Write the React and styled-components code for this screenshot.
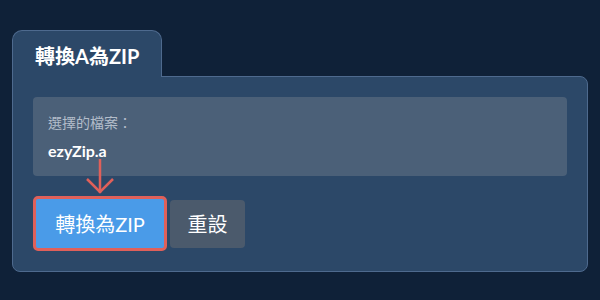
import React from 'react';
import styled, { createGlobalStyle } from 'styled-components';

const GlobalStyle = createGlobalStyle`
    html, body {
        margin: 0;
        background: #0f2138;
    }
    body {
        font-family: Lato, "Noto Sans CJK TC", sans-serif;
        color: white;
    }
`;

export default function App() {
    return (
        <>
            <GlobalStyle />
            <Page>
                <Tab>轉換A為ZIP</Tab>
                <Panel>
                    <FileBox>
                        <FileLabel>選擇的檔案：</FileLabel>
                        <FileName>ezyZip.a</FileName>
                    </FileBox>
                    <ActionRow>
                        <Pointer viewBox="0 0 30 36" width="30" height="36">
                            <line x1="15" y1="0" x2="15" y2="34" />
                            <polyline points="2,20 15,33 28,20" />
                        </Pointer>
                        <Button primary>轉換為ZIP</Button>
                        <Button>重設</Button>
                    </ActionRow>
                </Panel>
            </Page>
        </>
    );
}

const Page = styled.div`
    padding: 30px 12px 0 12px;
    width: 576px;
`;

const Tab = styled.div`
    position: relative;
    z-index: 1;
    display: inline-flex;
    align-items: center;
    box-sizing: border-box;
    width: 150px;
    height: 47px;
    margin-bottom: -1px;
    padding: 2px 0 0 22px;
    background: #2c4868;
    border: 1px solid #4e6a8e;
    border-bottom: none;
    border-radius: 10px 10px 0 0;
    font-size: 20px;
    font-weight: 700;
`;

const Panel = styled.div`
    box-sizing: border-box;
    padding: 20px;
    background: #2c4868;
    border: 1px solid #4e6a8e;
    border-radius: 0 8px 8px 8px;
`;

const FileBox = styled.div`
    padding: 16px 15px 14px 15px;
    background: #4b6078;
    border-radius: 4px;
`;

const FileLabel = styled.div`
    font-size: 14px;
    line-height: 20px;
    color: #b3bdca;
`;

const FileName = styled.div`
    margin-top: 7px;
    font-size: 16px;
    line-height: 22px;
    font-weight: 700;
`;

const ActionRow = styled.div`
    position: relative;
    display: flex;
    align-items: center;
    gap: 3px;
    margin-top: 20px;
`;

const Pointer = styled.svg`
    position: absolute;
    left: 52px;
    top: -37px;
    fill: none;
    stroke: #e0605a;
    stroke-width: 2.5;

    polyline {
        stroke-linejoin: miter;
    }
`;

const Button = styled.button`
    box-sizing: border-box;
    display: flex;
    align-items: center;
    justify-content: center;
    width: ${p => (p.primary ? '134px' : '75px')};
    height: ${p => (p.primary ? '55px' : '48px')};
    padding: 0;
    background: ${p => (p.primary ? '#4a9be8' : '#4b5a6c')};
    border: ${p => (p.primary ? '3px solid #e0605a' : 'none')};
    border-radius: ${p => (p.primary ? '5px' : '4px')};
    color: white;
    font-family: Lato, "Noto Sans CJK TC", sans-serif;
    font-size: 20px;
    cursor: pointer;
`;
